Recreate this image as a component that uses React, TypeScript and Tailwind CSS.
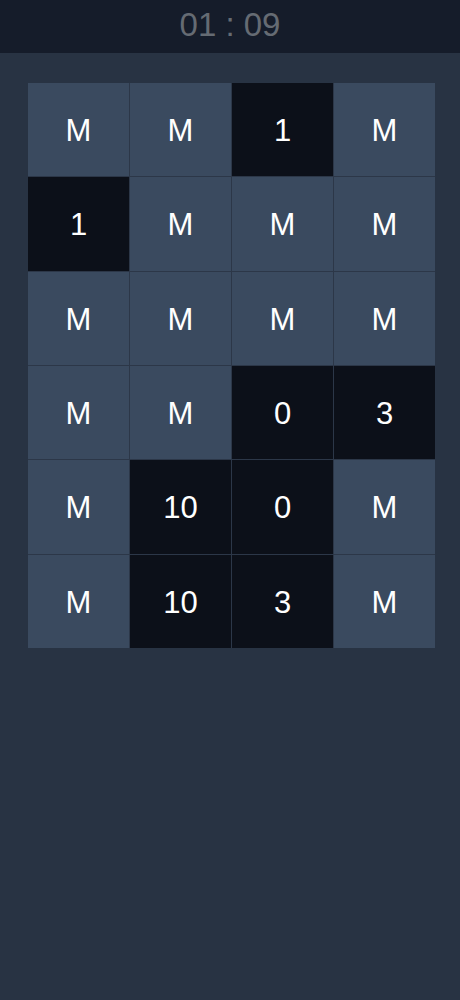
const cells: string[][] = [
  ["M", "M", "1", "M"],
  ["1", "M", "M", "M"],
  ["M", "M", "M", "M"],
  ["M", "M", "0", "3"],
  ["M", "10", "0", "M"],
  ["M", "10", "3", "M"],
]

export default function App() {
  return (
    <div className="flex min-h-[1000px] flex-col bg-[#273242] font-['Liberation_Sans',Arial,sans-serif]">
      <header className="flex h-[53px] items-center justify-center bg-[#151c2a] pb-[3px]">
        <span className="text-[33px] text-[#656b73]">01 : 09</span>
      </header>
      <main className="flex-1 bg-[#283343] pl-[28px] pt-[30px]">
        <div className="grid h-[565px] w-[407px] grid-cols-4 grid-rows-6 gap-px bg-[#2c3748]">
          {cells.flat().map((v, i) => (
            <div
              key={i}
              className={
                "flex items-center justify-center pt-[3px] text-[31px] text-white " +
                (v === "M" ? "bg-[#3a4a5f]" : "bg-[#0c1019]")
              }
            >
              {v}
            </div>
          ))}
        </div>
      </main>
    </div>
  )
}
